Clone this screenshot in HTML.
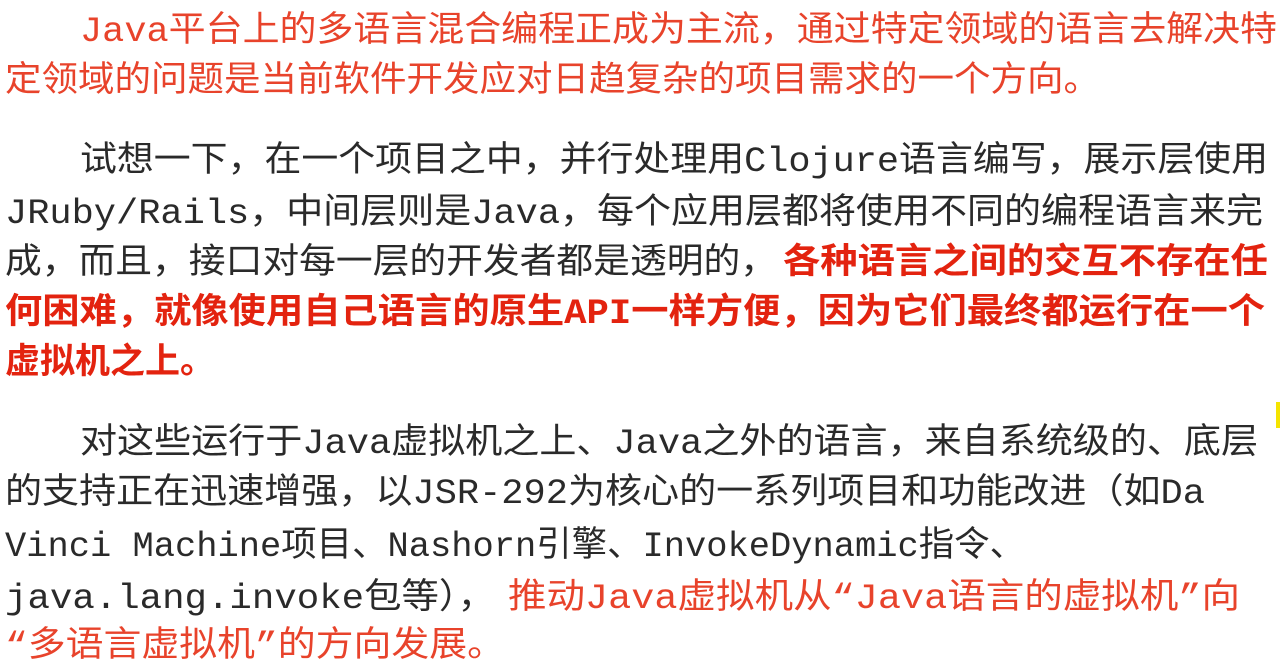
<!DOCTYPE html>
<html><head><meta charset="utf-8"><style>
html,body{margin:0;padding:0;background:#fff;width:1280px;height:671px;overflow:hidden}
svg text{font-family:"Liberation Mono","Noto Sans CJK SC",monospace;font-size:35px}
.k{fill:#2a2a2a}.r{fill:#e8432b}.b{fill:#e3230f;font-weight:bold}
</style></head><body>
<svg width="1280" height="671" xmlns="http://www.w3.org/2000/svg">
<text class="r" x="80" y="41" textLength="1197" lengthAdjust="spacingAndGlyphs">Java平台上的多语言混合编程正成为主流，通过特定领域的语言去解决特</text>
<text class="r" x="5" y="91" textLength="1095" lengthAdjust="spacingAndGlyphs">定领域的问题是当前软件开发应对日趋复杂的项目需求的一个方向。</text>
<text class="k" x="80" y="171" textLength="1188" lengthAdjust="spacingAndGlyphs">试想一下，在一个项目之中，并行处理用Clojure语言编写，展示层使用</text>
<text class="k" x="5" y="223" textLength="1258" lengthAdjust="spacingAndGlyphs">JRuby/Rails，中间层则是Java，每个应用层都将使用不同的编程语言来完</text>
<text class="k" x="5" y="273" textLength="772" lengthAdjust="spacingAndGlyphs">成，而且，接口对每一层的开发者都是透明的，</text>
<text class="b" x="783" y="273" textLength="485" lengthAdjust="spacingAndGlyphs">各种语言之间的交互不存在任</text>
<text class="b" x="5" y="323" textLength="1260" lengthAdjust="spacingAndGlyphs">何困难，就像使用自己语言的原生API一样方便，因为它们最终都运行在一个</text>
<text class="b" x="5" y="373" textLength="210" lengthAdjust="spacingAndGlyphs">虚拟机之上。</text>
<text class="k" x="80" y="453" textLength="1178" lengthAdjust="spacingAndGlyphs">对这些运行于Java虚拟机之上、Java之外的语言，来自系统级的、底层</text>
<text class="k" x="5" y="503" textLength="1200" lengthAdjust="spacingAndGlyphs">的支持正在迅速增强，以JSR-292为核心的一系列项目和功能改进（如Da</text>
<text class="k" x="5" y="556" textLength="1020" lengthAdjust="spacingAndGlyphs">Vinci Machine项目、Nashorn引擎、InvokeDynamic指令、</text>
<text class="k" x="5" y="608" textLength="490" lengthAdjust="spacingAndGlyphs">java.lang.invoke包等），</text>
<text class="r" x="508" y="608" textLength="732" lengthAdjust="spacingAndGlyphs">推动Java虚拟机从“Java语言的虚拟机”向</text>
<text class="r" x="5" y="656" textLength="500" lengthAdjust="spacingAndGlyphs">“多语言虚拟机”的方向发展。</text>
<rect x="1276" y="402" width="4" height="26" fill="#f5e400"/>
</svg>
</body></html>
